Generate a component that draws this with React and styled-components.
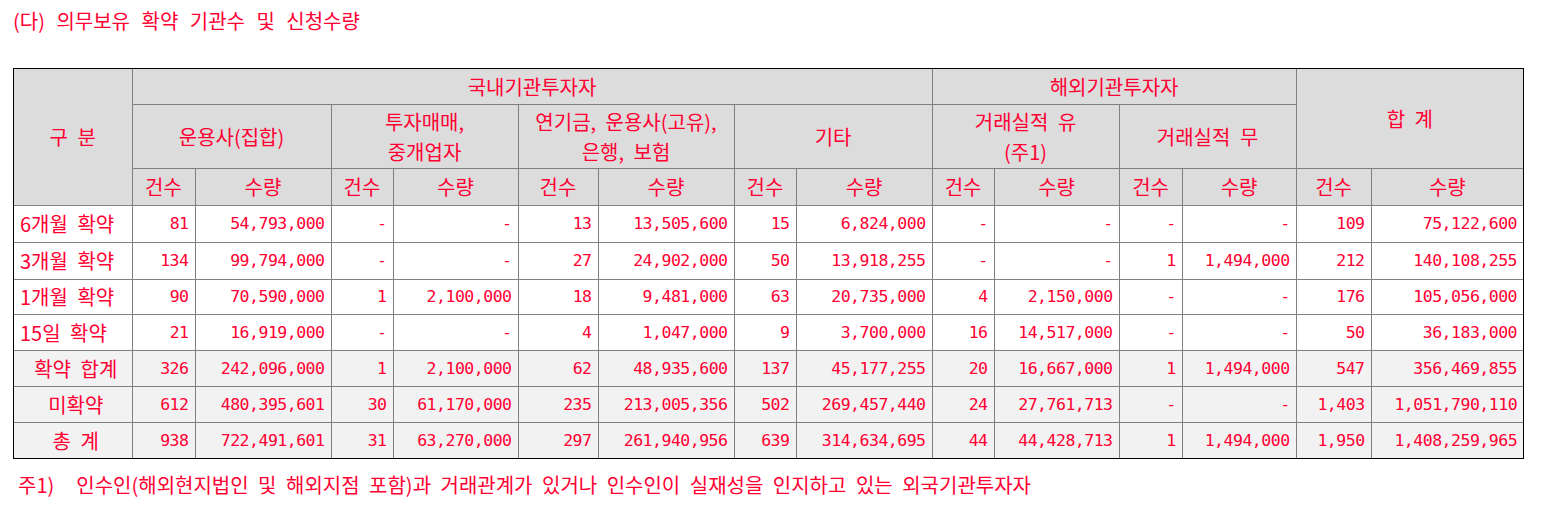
import styled, { createGlobalStyle } from "styled-components";

const GlobalStyle = createGlobalStyle`
  body {
    margin: 0;
    background: #ffffff;
    color: #ff0033;
    font-family: "Noto Sans CJK KR", "Noto Sans", sans-serif;
  }
`;

const Page = styled.div`
  padding: 8px 0 0 13px;
  width: 1511px;
`;

const Title = styled.div`
  font-size: 20px;
  line-height: 26px;
  word-spacing: 7px;
  margin-bottom: 34px;
`;

const Frame = styled.div`
  border: 1px solid #000000;
  width: 1509px;
`;

const Table = styled.table`
  width: 1509px;
  table-layout: fixed;
  border-collapse: collapse;
  border-style: hidden;
`;

const Head = styled.th`
  background: #dcdcdc;
  border: 1px solid #808080;
  font-weight: normal;
  font-size: 20px;
  line-height: 30px;
  word-spacing: 5px;
  text-align: center;
  vertical-align: middle;
  padding: 0;
  height: ${(p) => p.$h}px;
`;

const Label = styled.td`
  background: ${(p) => (p.$shaded ? "#f2f2f2" : "#ffffff")};
  border: 1px solid #808080;
  font-size: 20px;
  line-height: 26px;
  word-spacing: 5px;
  text-align: ${(p) => (p.$shaded ? "center" : "left")};
  padding: 0 0 0 6px;
  height: ${(p) => p.$h}px;
  white-space: nowrap;
`;

const Num = styled.td`
  background: ${(p) => (p.$shaded ? "#f2f2f2" : "#ffffff")};
  border: 1px solid #808080;
  font-family: "DejaVu Sans Mono", "Liberation Mono", monospace;
  font-size: 16.5px;
  letter-spacing: -0.5px;
  line-height: 26px;
  text-align: right;
  padding: 0 6px 0 0;
  white-space: nowrap;
`;

const Note = styled.div`
  font-size: 20px;
  line-height: 26px;
  word-spacing: 5px;
  margin-top: 13px;
  padding-left: 5px;
`;

const Gap = styled.span`
  display: inline-block;
  width: 22px;
`;

const widths = [118, 63, 136, 62, 125, 80, 136, 62, 136, 62, 125, 63, 114, 75, 152];

const rows = [
  ["6개월 확약", false, 36, ["81", "54,793,000", "-", "-", "13", "13,505,600", "15", "6,824,000", "-", "-", "-", "-", "109", "75,122,600"]],
  ["3개월 확약", false, 36, ["134", "99,794,000", "-", "-", "27", "24,902,000", "50", "13,918,255", "-", "-", "1", "1,494,000", "212", "140,108,255"]],
  ["1개월 확약", false, 34, ["90", "70,590,000", "1", "2,100,000", "18", "9,481,000", "63", "20,735,000", "4", "2,150,000", "-", "-", "176", "105,056,000"]],
  ["15일 확약", false, 35, ["21", "16,919,000", "-", "-", "4", "1,047,000", "9", "3,700,000", "16", "14,517,000", "-", "-", "50", "36,183,000"]],
  ["확약 합계", true, 35, ["326", "242,096,000", "1", "2,100,000", "62", "48,935,600", "137", "45,177,255", "20", "16,667,000", "1", "1,494,000", "547", "356,469,855"]],
  ["미확약", true, 35, ["612", "480,395,601", "30", "61,170,000", "235", "213,005,356", "502", "269,457,440", "24", "27,761,713", "-", "-", "1,403", "1,051,790,110"]],
  ["총 계", true, 35, ["938", "722,491,601", "31", "63,270,000", "297", "261,940,956", "639", "314,634,695", "44", "44,428,713", "1", "1,494,000", "1,950", "1,408,259,965"]],
];

const groups = [
  ["운용사(집합)"],
  ["투자매매,", "중개업자"],
  ["연기금, 운용사(고유),", "은행, 보험"],
  ["기타"],
  ["거래실적 유", "(주1)"],
  ["거래실적 무"],
];

function Lines({ lines }) {
  return lines.map((l, i) => (
    <span key={i}>
      {i > 0 && <br />}
      {l}
    </span>
  ));
}

function App() {
  return (
    <Page>
      <GlobalStyle />
      <Title>(다) 의무보유 확약 기관수 및 신청수량</Title>
      <Frame>
        <Table>
          <colgroup>
            {widths.map((w, i) => (
              <col key={i} style={{ width: w }} />
            ))}
          </colgroup>
          <thead>
            <tr>
              <Head rowSpan={3} $h={35}>구 분</Head>
              <Head colSpan={8} $h={35}>국내기관투자자</Head>
              <Head colSpan={4} $h={35}>해외기관투자자</Head>
              <Head colSpan={2} rowSpan={2} $h={35}>합 계</Head>
            </tr>
            <tr>
              {groups.map((g, i) => (
                <Head key={i} colSpan={2} $h={63}>
                  <Lines lines={g} />
                </Head>
              ))}
            </tr>
            <tr>
              {Array.from({ length: 7 }).map((_, i) => [
                <Head key={"c" + i} $h={36}>건수</Head>,
                <Head key={"q" + i} $h={36}>수량</Head>,
              ])}
            </tr>
          </thead>
          <tbody>
            {rows.map(([label, shaded, h, vals]) => (
              <tr key={label}>
                <Label $shaded={shaded} $h={h}>{label}</Label>
                {vals.map((v, i) => (
                  <Num key={i} $shaded={shaded}>{v}</Num>
                ))}
              </tr>
            ))}
          </tbody>
        </Table>
      </Frame>
      <Note>
        주1)<Gap />인수인(해외현지법인 및 해외지점 포함)과 거래관계가 있거나 인수인이 실재성을 인지하고 있는 외국기관투자자
      </Note>
    </Page>
  );
}

export default App;
